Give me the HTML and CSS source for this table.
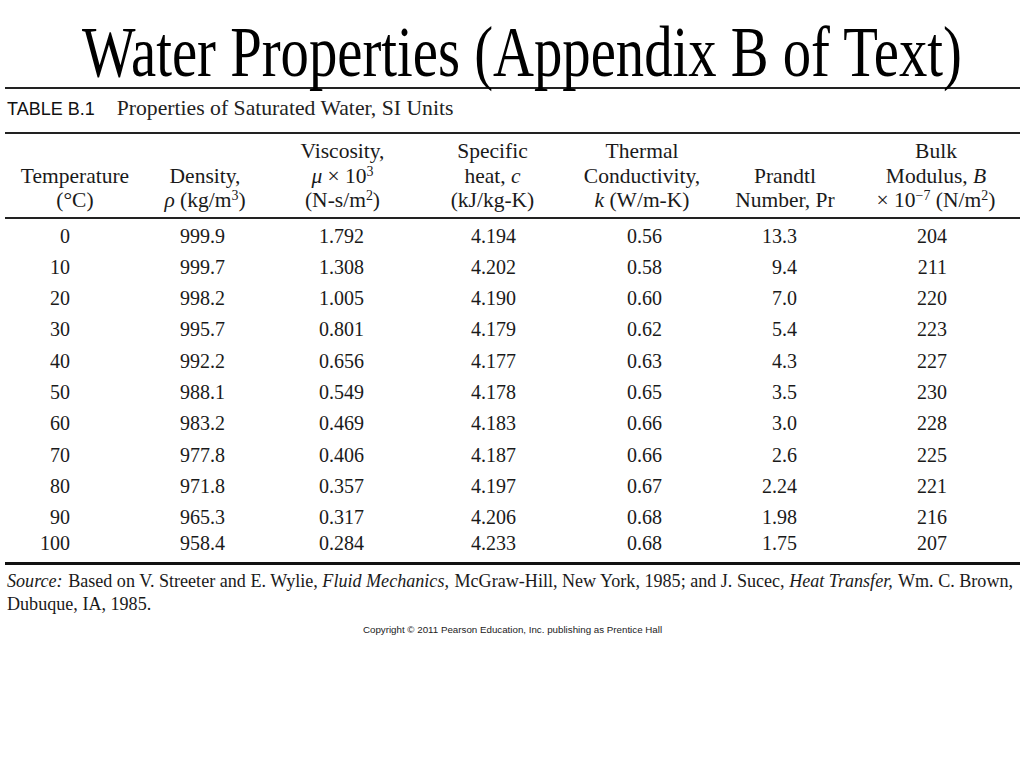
FILE: index.html
```html
<!DOCTYPE html>
<html lang="en">
<head>
<meta charset="utf-8">
<title>Water Properties (Appendix B of Text)</title>
<link rel="stylesheet" href="styles.css">
</head>
<body>
<div class="slide">
  <h1 class="title"><span class="title-text">Water Properties (Appendix B of Text)</span></h1>
  <div class="caption">
    <span class="caption-label">TABLE B.1</span>
    <span class="caption-text">Properties of Saturated Water, SI Units</span>
  </div>
  <table class="props">
    <colgroup>
      <col class="c1"><col class="c2"><col class="c3"><col class="c4"><col class="c5"><col class="c6"><col class="c7">
    </colgroup>
    <thead>
      <tr>
        <th class="h1">Temperature<br>(°C)</th>
        <th class="h2">Density,<br><i>ρ</i> (kg/m<sup>3</sup>)</th>
        <th class="h3">Viscosity,<br><i>μ</i> × 10<sup>3</sup><br>(N-s/m<sup>2</sup>)</th>
        <th class="h4">Specific<br>heat, <i>c</i><br>(kJ/kg-K)</th>
        <th class="h5">Thermal<br>Conductivity,<br><i>k</i> (W/m-K)</th>
        <th class="h6">Prandtl<br>Number, Pr</th>
        <th class="h7">Bulk<br>Modulus, <i>B</i><br>× 10<sup>−7</sup> (N/m<sup>2</sup>)</th>
      </tr>
    </thead>
    <tbody>
      <tr class="first"><td>0</td><td>999.9</td><td>1.792</td><td>4.194</td><td>0.56</td><td>13.3</td><td>204</td></tr>
      <tr><td>10</td><td>999.7</td><td>1.308</td><td>4.202</td><td>0.58</td><td>9.4</td><td>211</td></tr>
      <tr><td>20</td><td>998.2</td><td>1.005</td><td>4.190</td><td>0.60</td><td>7.0</td><td>220</td></tr>
      <tr><td>30</td><td>995.7</td><td>0.801</td><td>4.179</td><td>0.62</td><td>5.4</td><td>223</td></tr>
      <tr><td>40</td><td>992.2</td><td>0.656</td><td>4.177</td><td>0.63</td><td>4.3</td><td>227</td></tr>
      <tr><td>50</td><td>988.1</td><td>0.549</td><td>4.178</td><td>0.65</td><td>3.5</td><td>230</td></tr>
      <tr><td>60</td><td>983.2</td><td>0.469</td><td>4.183</td><td>0.66</td><td>3.0</td><td>228</td></tr>
      <tr><td>70</td><td>977.8</td><td>0.406</td><td>4.187</td><td>0.66</td><td>2.6</td><td>225</td></tr>
      <tr><td>80</td><td>971.8</td><td>0.357</td><td>4.197</td><td>0.67</td><td>2.24</td><td>221</td></tr>
      <tr><td>90</td><td>965.3</td><td>0.317</td><td>4.206</td><td>0.68</td><td>1.98</td><td>216</td></tr>
      <tr class="last"><td>100</td><td>958.4</td><td>0.284</td><td>4.233</td><td>0.68</td><td>1.75</td><td>207</td></tr>
    </tbody>
  </table>
  <p class="source"><i>Source:</i> Based on V. Streeter and E. Wylie, <i>Fluid Mechanics,</i> McGraw-Hill, New York, 1985; and J. Sucec, <i>Heat Transfer,</i> Wm. C. Brown,<br>Dubuque, IA, 1985.</p>
  <p class="copyright">Copyright © 2011 Pearson Education, Inc. publishing as Prentice Hall</p>
</div>
</body>
</html>
```
FILE: styles.css
```css
html, body {
  margin: 0;
  padding: 0;
  background: #fff;
}

body {
  font-family: "Liberation Serif", "Times New Roman", serif;
  color: #111;
}

.slide {
  width: 1015px;
  margin-left: 5px;
}

.title {
  margin: 0;
  padding: 29px 0 0 19px;
  height: 58px;
  font-weight: normal;
  font-size: 56.7px;
  line-height: 56px;
  text-align: center;
  white-space: nowrap;
  border-bottom: 2px solid #222;
  color: #000;
}

.title-text {
  display: inline-block;
  transform: scaleY(1.25);
  transform-origin: 50% 47px;
}

.caption {
  display: flex;
  align-items: baseline;
  gap: 22px;
  padding: 7px 0 11px 2px;
  line-height: 24px;
  border-bottom: 2px solid #222;
}

.caption-label {
  font-family: "Liberation Sans", Arial, sans-serif;
  font-size: 18px;
  color: #111;
}

.caption-text {
  font-size: 21.7px;
  color: #222;
}

.props {
  width: 1015px;
  border-collapse: collapse;
  table-layout: fixed;
}

.c1 { width: 135px; }
.c2 { width: 130px; }
.c3 { width: 145px; }
.c4 { width: 145px; }
.c5 { width: 155px; }
.c6 { width: 145px; }
.c7 { width: 160px; }

.props th {
  font-weight: normal;
  font-size: 21.5px;
  line-height: 24.5px;
  vertical-align: bottom;
  text-align: center;
  padding: 5px 0 4px 0;
  border-bottom: 2px solid #222;
  white-space: nowrap;
  color: #1a1a1a;
}

.props th.h1 { padding-left: 5px; }
.props th.h3 { padding-left: 0; }
.props th.h4 { padding-left: 10px; }
.props th.h5 { padding-left: 9px; }
.props th.h6 { padding-right: 5px; }
.props th.h7 { padding-right: 8px; }

.props sup {
  font-size: 0.65em;
  line-height: 0;
  vertical-align: 0.5em;
}

.props td {
  font-size: 20px;
  line-height: 31.3px;
  text-align: right;
  padding: 0;
  color: #1a1a1a;
}

.props td:nth-child(1) { padding-right: 70px; }
.props td:nth-child(2) { padding-right: 45px; }
.props td:nth-child(3) { padding-right: 51px; }
.props td:nth-child(4) { padding-right: 44px; }
.props td:nth-child(5) { padding-right: 53px; }
.props td:nth-child(6) { padding-right: 63px; }
.props td:nth-child(7) { padding-right: 73px; }

.props tr.first td { padding-top: 2px; }

.props tr.last td {
  line-height: 21px;
  padding-bottom: 7.5px;
  border-bottom: 3px solid #111;
}

.source {
  margin: 5.5px 0 0 2px;
  font-size: 18.1px;
  line-height: 23px;
  color: #1a1a1a;
  white-space: nowrap;
}

.source i {
  padding-right: 1px;
}

.copyright {
  margin: 8px 0 0 0;
  font-family: "Liberation Sans", Arial, sans-serif;
  font-size: 9.75px;
  line-height: 12px;
  text-align: center;
  color: #222;
}
```
